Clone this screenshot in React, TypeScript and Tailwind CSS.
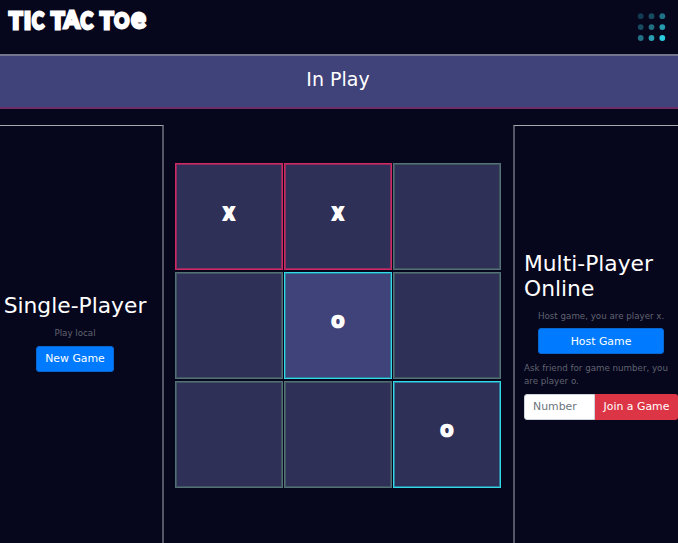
type Mark = "x" | "o" | "";

const board: Mark[] = ["x", "x", "", "", "o", "", "", "", "o"];

const tones = {
  x: "border-[#d02962] shadow-[inset_0_0_0_1px_#8f2c60]",
  o: "border-[#32dae7] shadow-[inset_0_0_0_1px_#307f9a]",
  "": "border-[#547078] shadow-[inset_0_0_0_1px_#40565f]",
};

const titleGlyphs: [string, number, number, number][] = [
  ["T", 9, 13.5, 29],
  ["I", 24, 7, 29],
  ["C", 32, 12, 28.8],
  ["T", 51, 13.5, 29],
  ["A", 64, 15.5, 28.3],
  ["C", 80.5, 12.5, 28.5],
  ["T", 100, 13.5, 29],
  ["O", 114.3, 15, 27.8],
  ["e", 131.2, 14.5, 28],
];

function Title() {
  return (
    <svg width="160" height="50" className="block" aria-label="Tic Tac Toe">
      {titleGlyphs.map(([g, x, w, y], i) => (
        <text
          key={i}
          x={x}
          y={y}
          textLength={w}
          lengthAdjust="spacingAndGlyphs"
          fontFamily="Lato, sans-serif"
          fontWeight="900"
          fontSize={g === "e" ? 28 : g === "O" ? 21.5 : 23}
          fill="white"
          stroke="white"
          strokeWidth="2.8"
        >
          {g}
        </text>
      ))}
    </svg>
  );
}

const dots = ["#123b51", "#174b60", "#1f7186", "#174b60", "#226f82", "#279caf", "#207186", "#299eb2", "#2dcde0"];

function Cell({ mark, active }: { mark: Mark; active: boolean }) {
  return (
    <div className={`flex items-center justify-center border ${tones[mark]} ${active ? "bg-[#40427a]" : "bg-[#2e3058]"}`}>
      {mark && (
        <svg width="40" height="50" className="mb-2">
          <text
            x="20"
            y={mark === "x" ? 31.7 : 30}
            textAnchor="middle"
            textLength={mark === "x" ? 10.8 : 12.8}
            lengthAdjust="spacingAndGlyphs"
            fontFamily={mark === "x" ? "Lato, sans-serif" : "DejaVu Sans, sans-serif"}
            fontWeight={mark === "x" ? 900 : 400}
            fontSize={mark === "x" ? 24 : 19.5}
            fill="white"
            stroke="white"
            strokeWidth={mark === "x" ? 2 : 2.6}
          >
            {mark}
          </text>
        </svg>
      )}
    </div>
  );
}

export default function App() {
  return (
    <div className="flex h-[543px] w-[678px] flex-col overflow-hidden bg-[#06061d] font-['DejaVu_Sans',sans-serif] text-white">
      <header className="flex h-[54px] shrink-0 justify-between">
        <Title />
        <svg width="44" height="48" aria-label="Menu">
          {dots.map((fill, i) => (
            <circle key={i} cx={6.7 + (i % 3) * 10.8} cy={16.2 + Math.floor(i / 3) * 10.9} r="2.9" fill={fill} />
          ))}
        </svg>
      </header>
      <div className="flex h-[55px] shrink-0 justify-center border-t-2 border-b-2 border-t-[#74758e] border-b-[#6d2e67] bg-[#40427a] pt-[9px] pr-[2px] text-[19px] leading-7">
        In Play
      </div>
      <main className="flex grow pt-4">
        <aside className="flex w-[164px] shrink-0 flex-col items-center justify-center border-t border-r-2 border-t-[#a8a8ae] border-r-[#575666] pr-3 pb-[4px]">
          <h2 className="text-[21.8px] leading-[25px] whitespace-nowrap">Single-Player</h2>
          <p className="mt-[9px] text-[8.7px] leading-[13px] text-[#60646f]">Play local</p>
          <button className="mt-[6px] h-[26px] w-[78px] rounded-[3px] border border-[#0867d0] bg-[#007bff] text-[10.9px] leading-4">New Game</button>
        </aside>
        <section className="mt-[38px] ml-[11px] grid h-[325px] w-[326px] shrink-0 grid-cols-3 grid-rows-3 gap-x-px gap-y-[2px]">
          {board.map((mark, i) => (
            <Cell key={i} mark={mark} active={i === 4} />
          ))}
        </section>
        <aside className="ml-3 flex w-[165px] shrink-0 flex-col justify-center border-t border-l-2 border-t-[#a8a8ae] border-l-[#575666] pt-px pl-[9px]">
          <h2 className="text-[21.8px] leading-[25px]">Multi-Player Online</h2>
          <p className="mt-[9px] ml-[14px] text-[8.7px] leading-[13px] whitespace-nowrap text-[#60646f]">Host game, you are player x.</p>
          <button className="mt-[5px] ml-[14px] h-[26px] w-[126px] rounded-[3px] border border-[#0867d0] bg-[#007bff] pt-[2px] text-[10.9px] leading-4">Host Game</button>
          <p className="mt-[8px] text-[8.7px] leading-[13px] whitespace-nowrap text-[#60646f]">
            Ask friend for game number, you
            <br />
            are player o.
          </p>
          <div className="mt-[6px] flex h-[26px]">
            <input placeholder="Number" className="w-[71px] shrink-0 rounded-l-[3px] border border-[#ced4da] bg-white px-[8px] pt-px text-[10.9px] text-black placeholder:text-[#6c757d]" />
            <button className="w-[83px] shrink-0 rounded-r-[3px] bg-[#dc3545] pt-px text-[10.9px] whitespace-nowrap">Join a Game</button>
          </div>
        </aside>
      </main>
    </div>
  );
}
